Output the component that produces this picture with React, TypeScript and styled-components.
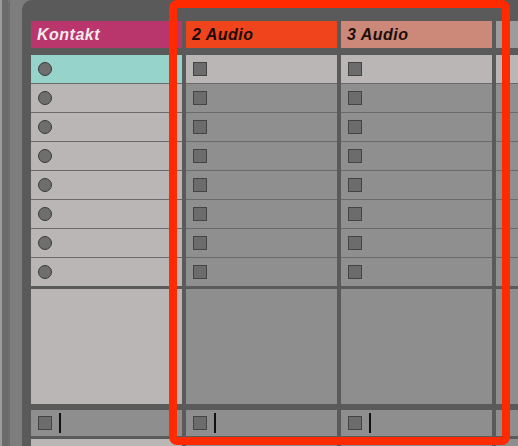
import styled, { createGlobalStyle } from "styled-components";

const GlobalStyle = createGlobalStyle`
  html, body {
    margin: 0;
    padding: 0;
    background: #7b7b7b;
    overflow: hidden;
  }
  body {
    font-family: "Liberation Sans", Arial, sans-serif;
  }
`;

interface Track {
  name: string;
  color: string;
  textColor: string;
  kind: "midi" | "audio" | "blank";
}

const tracks: Track[] = [
  { name: "Kontakt", color: "#b8366c", textColor: "#f4eaf0", kind: "midi" },
  { name: "2 Audio", color: "#f0441c", textColor: "#1a0805", kind: "audio" },
  { name: "3 Audio", color: "#cc8878", textColor: "#1c0d0a", kind: "audio" },
  { name: "", color: "#9c9c9c", textColor: "#222", kind: "blank" },
];

const SLOT_COUNT = 8;

export default function App() {
  return (
    <>
      <GlobalStyle />
      <Page>
        <LeftRail>
          <RailEdge />
          <RailStrip />
        </LeftRail>
        <Session>
          {tracks.map((track, i) => {
            const light = track.kind === "midi";
            return (
              <Column key={i}>
                <Header $color={track.color} $text={track.textColor}>
                  {track.name}
                </Header>
                <SlotList>
                  {Array.from({ length: SLOT_COUNT }).map((_, s) => (
                    <Slot
                      key={s}
                      $bg={
                        light && s === 0
                          ? "#96d3cb"
                          : light || s === 0
                          ? "#bab6b5"
                          : "#8f8f8f"
                      }
                    >
                      {track.kind === "midi" && <RecordButton />}
                      {track.kind === "audio" && <StopButton />}
                    </Slot>
                  ))}
                </SlotList>
                <DropArea $light={light} />
                <StopRow>
                  {track.kind !== "blank" && (
                    <>
                      <StopButton />
                      <Cursor />
                    </>
                  )}
                </StopRow>
                <Footer $light={light} />
              </Column>
            );
          })}
        </Session>
        <Highlight />
      </Page>
    </>
  );
}

const Page = styled.div`
  position: relative;
  display: flex;
  width: 518px;
  height: 446px;
  overflow: hidden;
`;

const LeftRail = styled.div`
  display: flex;
  flex: 0 0 22px;
`;

const RailEdge = styled.div`
  width: 8px;
  background: linear-gradient(
    to right,
    #9a9a9a 0,
    #9a9a9a 2px,
    #6a6a6a 2px
  );
`;

const RailStrip = styled.div`
  flex: 1;
  background: linear-gradient(to right, #6e6e6e 0, #6e6e6e 2px, #7d7d7d 2px);
  border-top-left-radius: 4px;
`;

const Session = styled.div`
  flex: 1;
  display: flex;
  gap: 4px;
  padding: 21px 0 0 9px;
  background: #5a5a5a;
  border-top-left-radius: 10px;
`;

const Column = styled.div`
  flex: 0 0 151px;
  display: flex;
  flex-direction: column;
`;

const Header = styled.div<{ $color: string; $text: string }>`
  height: 27px;
  display: flex;
  align-items: center;
  padding-left: 6px;
  background: ${({ $color }) => $color};
  color: ${({ $text }) => $text};
  font-size: 16px;
  font-weight: 700;
  font-style: italic;
  letter-spacing: 0.5px;
  white-space: nowrap;
`;

const SlotList = styled.div`
  margin-top: 7px;
  display: flex;
  flex-direction: column;
  gap: 1px;
  background: #6a6a6a;
`;

const Slot = styled.div<{ $bg: string }>`
  height: 28px;
  display: flex;
  align-items: center;
  padding-left: 7px;
  background: ${({ $bg }) => $bg};
`;

const RecordButton = styled.span`
  width: 14px;
  height: 14px;
  box-sizing: border-box;
  border-radius: 50%;
  border: 1.5px solid #3a3a3a;
  background: #6e6e6e;
`;

const StopButton = styled.span`
  width: 14px;
  height: 14px;
  box-sizing: border-box;
  border: 1.5px solid #444;
  background: #6c6c6c;
`;

const DropArea = styled.div<{ $light: boolean }>`
  margin-top: 3px;
  height: 115px;
  background: ${({ $light }) => ($light ? "#bab6b5" : "#8e8e8e")};
`;

const StopRow = styled.div`
  margin-top: 6px;
  height: 26px;
  display: flex;
  align-items: center;
  gap: 7px;
  padding-left: 7px;
  background: #8e8e8e;
`;

const Cursor = styled.span`
  width: 2px;
  height: 20px;
  background: #111;
`;

const Footer = styled.div<{ $light: boolean }>`
  margin-top: 3px;
  flex: 1;
  background: ${({ $light }) => ($light ? "#bab6b5" : "#8e8e8e")};
`;

const Highlight = styled.div`
  position: absolute;
  left: 169px;
  top: 0;
  width: 341px;
  height: 445px;
  box-sizing: border-box;
  border: 8.5px solid #ff2a00;
  border-radius: 8px;
  pointer-events: none;
`;
